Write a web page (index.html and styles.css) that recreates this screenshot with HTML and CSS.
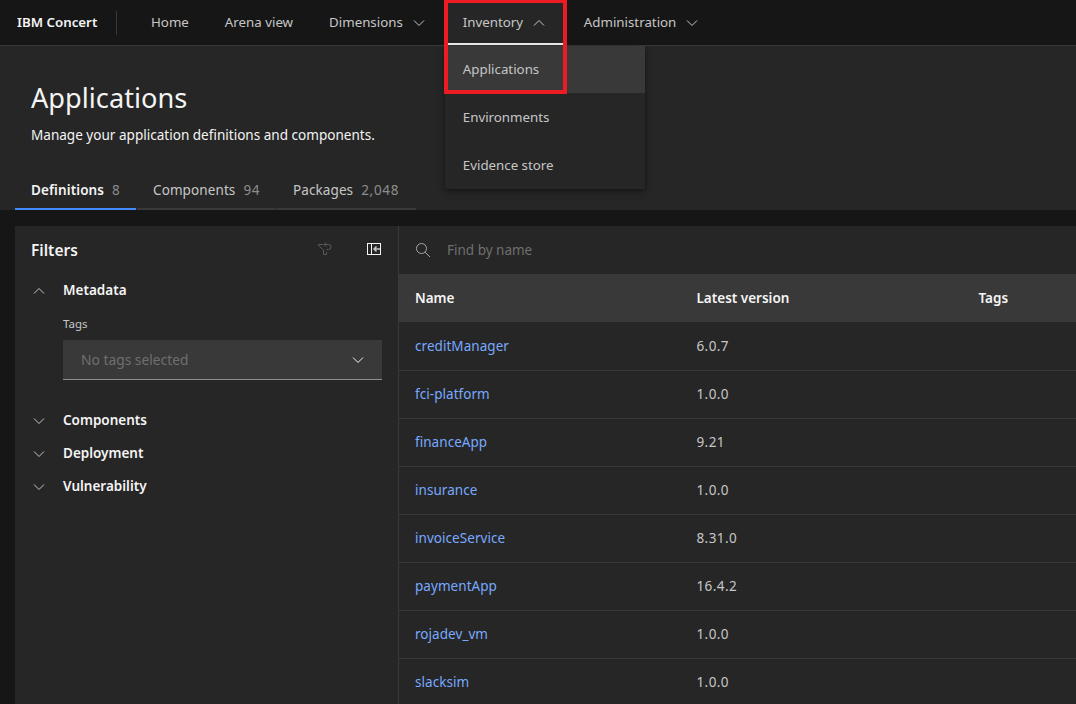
FILE: index.html
```html
<!DOCTYPE html>
<html lang="en">
<head>
  <meta charset="UTF-8" />
  <title>Applications</title>
  <link rel="stylesheet" href="styles.css">
</head>
<body>

  <header class="topbar">
    <div class="brand"><span>IBM Concert</span></div>
    <nav class="nav">
      <a class="nav-item">Home</a>
      <a class="nav-item">Arena view</a>
      <a class="nav-item">Dimensions
        <svg class="chev" viewBox="0 0 16 16"><path d="M3 5.500l5 5 5-5"/></svg>
      </a>
      <div class="nav-group">
        <a class="nav-item nav-open">Inventory
          <svg class="chev" viewBox="0 0 16 16"><path d="M3 10.500l5-5 5 5"/></svg>
        </a>
        <div class="menu">
          <a class="menu-item menu-active">Applications</a>
          <a class="menu-item">Environments</a>
          <a class="menu-item">Evidence store</a>
        </div>
        <div class="callout"></div>
      </div>
      <a class="nav-item">Administration
        <svg class="chev" viewBox="0 0 16 16"><path d="M3 5.500l5 5 5-5"/></svg>
      </a>
    </nav>
  </header>

  <section class="page-head">
    <h1>Applications</h1>
    <p>Manage your application definitions and components.</p>
    <div class="tabs">
      <a class="tab tab-active"><span class="tab-name">Definitions</span><span class="count">8</span></a>
      <a class="tab"><span class="tab-name">Components</span><span class="count">94</span></a>
      <a class="tab"><span class="tab-name">Packages</span><span class="count">2,048</span></a>
    </div>
  </section>

  <main class="content">
    <aside class="filters">
      <div class="filters-head">
        <h2>Filters</h2>
        <svg class="reset-icon" viewBox="0 0 16 16"><path d="M6 3.500H1.500v1L6.500 9v4.500h3V11"/><path d="M9 1.500L7 3.500l2 2M7 3.500h4.500a2.500 2.500 0 0 1 0 5H9.500"/></svg>
        <svg class="collapse-icon" viewBox="0 0 16 16"><rect x="1.500" y="2.500" width="13" height="11"/><path d="M5.500 2.500v11"/><path class="collapse-arrow" d="M14 8H8M10.500 5.500L8 8l2.500 2.500"/></svg>
      </div>

      <div class="group">
        <svg class="chev" viewBox="0 0 16 16"><path d="M3 10.500l5-5 5 5"/></svg>
        <span>Metadata</span>
      </div>
      <div class="group-body">
        <label class="field-label">Tags</label>
        <div class="select">
          <span>No tags selected</span>
          <svg class="chev" viewBox="0 0 16 16"><path d="M3 5.500l5 5 5-5"/></svg>
        </div>
      </div>
      <div class="group">
        <svg class="chev" viewBox="0 0 16 16"><path d="M3 5.500l5 5 5-5"/></svg>
        <span>Components</span>
      </div>
      <div class="group">
        <svg class="chev" viewBox="0 0 16 16"><path d="M3 5.500l5 5 5-5"/></svg>
        <span>Deployment</span>
      </div>
      <div class="group">
        <svg class="chev" viewBox="0 0 16 16"><path d="M3 5.500l5 5 5-5"/></svg>
        <span>Vulnerability</span>
      </div>
    </aside>

    <section class="results">
      <div class="search">
        <svg class="search-icon" viewBox="0 0 16 16"><circle cx="6.500" cy="6.500" r="5"/><path d="M10.200 10.200L15 15"/></svg>
        <span>Find by name</span>
      </div>
      <div class="row row-head"><span>Name</span><span>Latest version</span><span>Tags</span></div>
      <div class="row"><a>creditManager</a><span class="version">6.0.7</span><span></span></div>
      <div class="row"><a>fci-platform</a><span class="version">1.0.0</span><span></span></div>
      <div class="row"><a>financeApp</a><span class="version">9.21</span><span></span></div>
      <div class="row"><a>insurance</a><span class="version">1.0.0</span><span></span></div>
      <div class="row"><a>invoiceService</a><span class="version">8.31.0</span><span></span></div>
      <div class="row"><a>paymentApp</a><span class="version">16.4.2</span><span></span></div>
      <div class="row"><a>rojadev_vm</a><span class="version">1.0.0</span><span></span></div>
      <div class="row"><a>slacksim</a><span class="version">1.0.0</span><span></span></div>
    </section>
  </main>

</body>
</html>
```

FILE: styles.css
```css
* {
  box-sizing: border-box;
}
html, body {
  height: 704px;
  overflow: hidden;
}
body {
  margin: 0;
  background: #161616;
  color: #f4f4f4;
  font-family: "Noto Sans", sans-serif;
  font-size: 13.5px;
}
svg {
  display: block;
  fill: none;
  stroke: currentColor;
  stroke-width: 1;
  flex: none;
}
.chev {
  width: 16px;
  height: 16px;
}

/* top bar */
.topbar {
  display: flex;
  height: 46px;
  background: #161616;
  border-bottom: 1px solid #393939;
  position: relative;
  z-index: 2;
}
.brand {
  display: flex;
  align-items: center;
  width: 117px;
  height: 45px;
  padding-left: 17px;
  font-weight: 600;
  font-size: 13.3px;
}
.brand span {
  flex: 1;
  height: 24px;
  line-height: 22px;
  border-right: 1px solid #393939;
}
.nav {
  display: flex;
  height: 45px;
  padding-left: 16px;
  font-size: 13.3px;
}
.nav-item {
  display: flex;
  align-items: center;
  gap: 8px;
  height: 45px;
  padding: 0 18px 2px;
  color: #c6c6c6;
  white-space: nowrap;
}
.nav-item .chev {
  margin-top: 2px;
}
.nav-group {
  position: relative;
}
.nav-open {
  width: 121px;
  height: 45px;
  background: #262626;
  box-shadow: inset 0 -2px 0 #f4f4f4;
}
.menu {
  position: absolute;
  left: 0;
  top: 46px;
  width: 200px;
  background: #262626;
  box-shadow: 0 2px 6px rgba(0, 0, 0, 0.5);
}
.menu-item {
  display: flex;
  align-items: center;
  height: 47px;
  padding: 0 18px 2px;
  color: #c6c6c6;
}
.menu-item + .menu-item {
  height: 48px;
  padding-bottom: 0;
}
.menu-active {
  background: #393939;
}
.callout {
  position: absolute;
  left: -1px;
  top: 0;
  width: 123px;
  height: 94px;
  border: 4px solid #ed1c24;
  border-top-width: 3px;
  pointer-events: none;
}

/* page heading */
.page-head {
  background: #262626;
  height: 164px;
  padding: 33px 0 0 31px;
}
.page-head h1 {
  margin: 0;
  font-size: 27.2px;
  font-weight: 400;
  line-height: 38px;
}
.page-head p {
  margin: 8px 0 0;
  font-size: 13.55px;
  line-height: 20px;
}
.tabs {
  display: flex;
  gap: 1px;
  margin: 26px 0 0 -16px;
}
.tab {
  display: flex;
  gap: 8px;
  width: 139px;
  height: 39px;
  padding-left: 16px;
  line-height: 38px;
  letter-spacing: 0.1px;
  color: #c6c6c6;
  border-bottom: 2px solid #393939;
}
.tab .count {
  color: #8d8d8d;
  letter-spacing: 0.7px;
}
.tab-active {
  width: 121px;
  color: #f4f4f4;
  border-bottom-color: #4589ff;
}
.tab-active .tab-name {
  font-weight: 600;
}

/* filters + table */
.content {
  display: flex;
  height: 478px;
  margin: 16px 0 0 15px;
  background: #262626;
}
.filters {
  flex: none;
  width: 384px;
  padding: 0 16px;
  border-right: 1px solid #393939;
}
.filters-head {
  display: flex;
  align-items: center;
  height: 47px;
  padding-top: 1px;
}
.filters-head h2 {
  flex: 1;
  margin: 0;
  font-size: 15.5px;
  font-weight: 600;
}
.reset-icon {
  width: 16px;
  height: 16px;
  color: #5a5a5a;
  margin: -2px 33px 0 0;
}
.collapse-icon {
  width: 16px;
  height: 16px;
  color: #f4f4f4;
  margin-top: -2px;
}
.collapse-arrow {
  color: #c6c6c6;
  stroke-width: 1.5;
}
.group {
  display: flex;
  align-items: center;
  gap: 16px;
  height: 33px;
  font-weight: 600;
  color: #f4f4f4;
}
.group .chev {
  color: #c6c6c6;
  margin-top: 2px;
}
.group-body {
  padding: 10px 0 23px 32px;
}
.field-label {
  display: block;
  font-size: 11.5px;
  line-height: 16px;
  color: #c6c6c6;
  margin-bottom: 8px;
}
.select {
  display: flex;
  align-items: center;
  justify-content: space-between;
  height: 40px;
  padding: 0 16px 0 18px;
  background: #393939;
  border-bottom: 1px solid #8d8d8d;
  color: #6f6f6f;
  font-size: 13.8px;
}
.select .chev {
  color: #f4f4f4;
}
.results {
  flex: 1;
  min-width: 0;
}
.search {
  display: flex;
  align-items: center;
  gap: 16px;
  height: 48px;
  padding-left: 16px;
  color: #6f6f6f;
}
.search-icon {
  width: 16px;
  height: 16px;
  color: #a8a8a8;
}
.row {
  display: grid;
  grid-template-columns: 281.5px 282px 1fr;
  align-items: center;
  height: 48px;
  padding: 0 0 1px 16px;
  border-top: 1px solid #393939;
  color: #c6c6c6;
}
.row a {
  color: #78a9ff;
  letter-spacing: 0.05px;
}
.row .version {
  letter-spacing: 0.4px;
}
.row-head {
  padding-bottom: 0;
  background: #393939;
  color: #f4f4f4;
  font-weight: 600;
  border-top: 0;
}
.row-head + .row {
  padding-bottom: 0;
  border-top: 0;
}
```
